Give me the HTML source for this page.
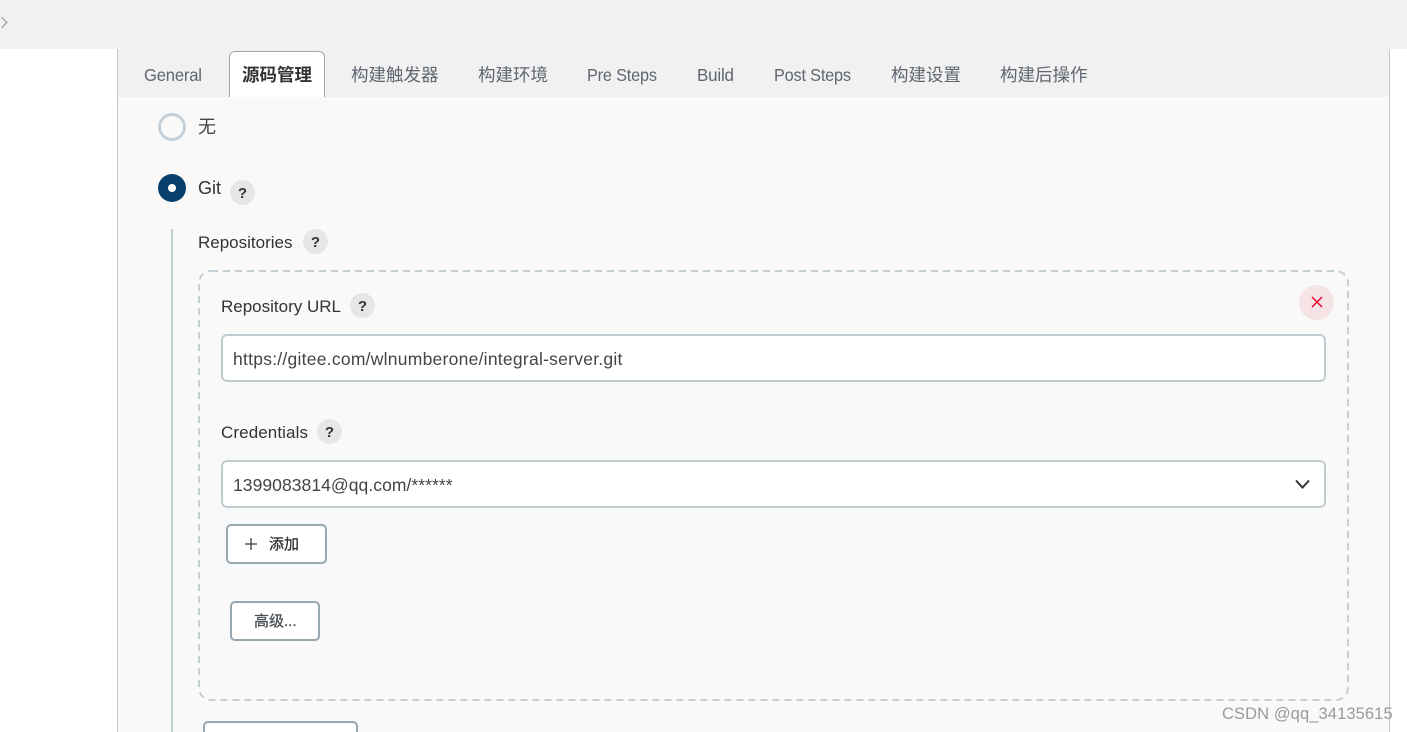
<!DOCTYPE html>
<html><head><meta charset="utf-8"><style>
html,body{margin:0;padding:0;width:1407px;height:732px;overflow:hidden;background:#fff}
body{position:relative;font-family:"Liberation Sans","Noto Sans CJK SC",sans-serif;color:#333}
.a,.t{position:absolute;white-space:nowrap}
.t{line-height:20px}
.tab{font-size:17.5px;color:#5f6670;top:65px;transform-origin:left center}
.lb{font-size:17px;color:#333}
.h{position:absolute;width:25px;height:25px;border-radius:50%;background:#e6e6e6;color:#333;font-size:15px;font-weight:bold;text-align:center;line-height:27px}
.in{position:absolute;left:221px;width:1101px;height:44px;background:#fff;border:2px solid #c0ccd2;border-radius:6px}
.btn{position:absolute;box-sizing:border-box;background:#fff;border:2px solid #98a6b0;border-radius:5px}
</style></head><body>
<div class="a" style="left:0;top:0;width:1407px;height:49px;background:#f2f2f2"></div>
<svg class="a" style="left:0;top:15px" width="10" height="15"><path d="M1.500 2L6.800 7.500L1.500 13" fill="none" stroke="#999" stroke-width="1.200"/></svg>
<div class="a" style="left:117px;top:49px;width:1271px;height:683px;background:#f9f9f9;border-left:1px solid #c4ccd0;border-right:1px solid #c4c4c4"></div>
<div class="a" style="left:118px;top:49px;width:1271px;height:48px;background:#f1f1f1"></div>
<div class="a" style="left:229px;top:51px;width:94px;height:45px;background:#fff;border:1px solid #9ba7af;border-bottom:0;border-radius:6px 6px 0 0"></div>
<div class="t tab" style="left:144px;transform:scaleX(.95);letter-spacing:-.2px">General</div>
<div class="t" style="left:242px;top:65px;font-size:17.500px;font-weight:bold;color:#333">源码管理</div>
<div class="t tab" style="left:351px">构建触发器</div>
<div class="t tab" style="left:478px">构建环境</div>
<div class="t tab" style="left:587px;transform:scaleX(.93);letter-spacing:-.2px">Pre Steps</div>
<div class="t tab" style="left:697px;transform:scaleX(.97);letter-spacing:-.2px">Build</div>
<div class="t tab" style="left:774px;transform:scaleX(.93);letter-spacing:-.2px">Post Steps</div>
<div class="t tab" style="left:891px">构建设置</div>
<div class="t tab" style="left:1000px">构建后操作</div>
<div class="a" style="left:158px;top:113px;width:22px;height:22px;border:3px solid #c5d0d8;border-radius:50%;background:#fafafa"></div>
<div class="t" style="left:198px;top:117px;font-size:18px;color:#444">无</div>
<div class="a" style="left:158px;top:174px;width:28px;height:28px;border-radius:50%;background:#07406a"></div>
<div class="a" style="left:168px;top:184px;width:8px;height:8px;border-radius:50%;background:#fff"></div>
<div class="t" style="left:198px;top:178px;font-size:18px;color:#333">Git</div>
<div class="h" style="left:230px;top:180px">?</div>
<div class="a" style="left:171px;top:229px;width:2px;height:503px;background:#c0ccd2"></div>
<div class="t lb" style="left:198px;top:233px">Repositories</div>
<div class="h" style="left:303px;top:229px">?</div>
<svg class="a" style="left:197px;top:269px" width="1153" height="433"><rect x="2" y="2" width="1149" height="429" rx="12" fill="none" stroke="#c5d0d6" stroke-width="2" stroke-dasharray="7 5"/></svg>
<div class="t lb" style="left:221px;top:297px">Repository URL</div>
<div class="h" style="left:350px;top:293px">?</div>
<div class="a" style="left:1299px;top:285px;width:35px;height:35px;border-radius:50%;background:#f5e3e6"></div>
<svg class="a" style="left:1311px;top:296px" width="12" height="12"><path d="M1 1L11 11M11 1L1 11" stroke="#e6002d" stroke-width="1.400" fill="none"/></svg>
<div class="in" style="top:334px"></div>
<div class="t" style="left:233px;top:349px;font-size:17.500px;letter-spacing:.25px;color:#444">https://gitee.com/wlnumberone/integral-server.git</div>
<div class="t lb" style="left:221px;top:423px;letter-spacing:.1px">Credentials</div>
<div class="h" style="left:317px;top:419px">?</div>
<div class="in" style="top:460px"></div>
<div class="t" style="left:233px;top:475px;font-size:17.500px;letter-spacing:.06px;color:#444">1399083814@qq.com/******</div>
<svg class="a" style="left:1294px;top:478px" width="18" height="13"><path d="M2 2.500L8.500 9.500L15 2.500" fill="none" stroke="#333" stroke-width="2"/></svg>
<div class="btn" style="left:226px;top:524px;width:101px;height:40px"></div>
<svg class="a" style="left:244px;top:537px" width="14" height="14"><path d="M7 1V13M1 7H13" stroke="#555" stroke-width="1.500" fill="none"/></svg>
<div class="t" style="left:269px;top:535px;font-size:15px;color:#333;-webkit-text-stroke:.3px #333">添加</div>
<div class="btn" style="left:230px;top:601px;width:90px;height:40px"></div>
<div class="t" style="left:254px;top:612px;font-size:15px;color:#4a4f57;-webkit-text-stroke:.3px #4a4f57">高级...</div>
<div class="btn" style="left:203px;top:721px;width:155px;height:30px"></div>
<div class="t" style="left:1222px;top:704px;font-size:16.500px;color:#9a9a9a;letter-spacing:.1px">CSDN @qq_34135615</div>
</body></html>
